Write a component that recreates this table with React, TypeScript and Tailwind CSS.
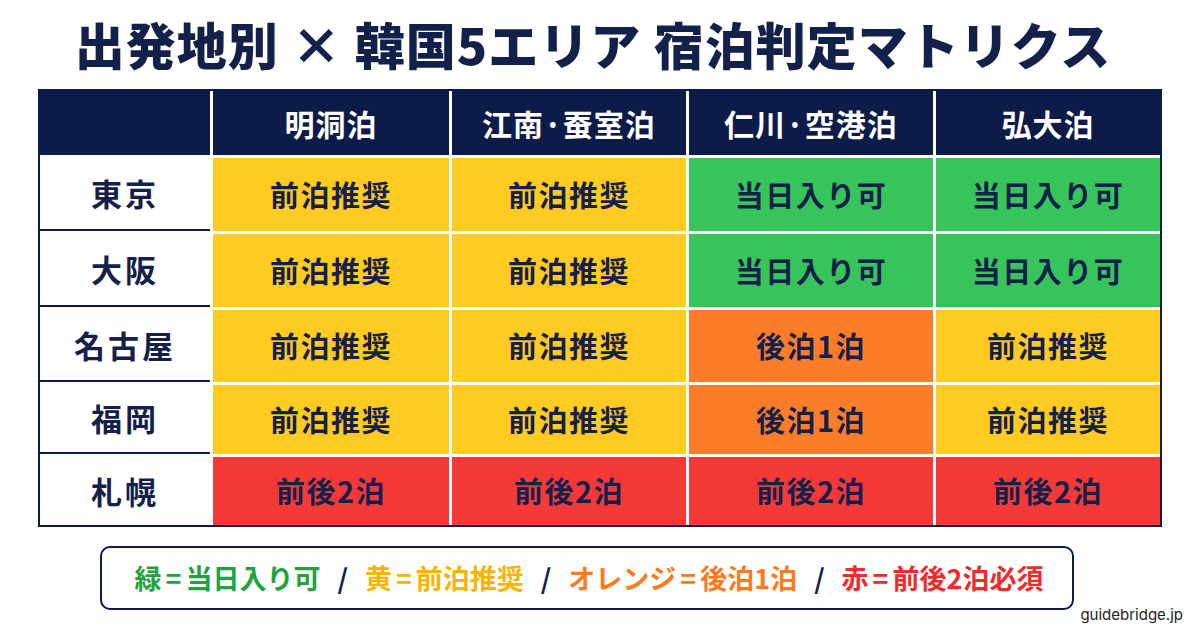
import React from "react";

type Kind = "y" | "g" | "o" | "r";

const cellBg: Record<Kind, string> = {
  y: "bg-[#fdcb21]",
  g: "bg-[#37c55b]",
  o: "bg-[#fb7d2a]",
  r: "bg-[#f43a38]",
};

const cellText: Record<Kind, string> = {
  y: "前泊推奨",
  g: "当日入り可",
  o: "後泊1泊",
  r: "前後2泊",
};

const rows: { label: string; cells: Kind[]; h: string }[] = [
  { label: "東京", cells: ["y", "y", "g", "g"], h: "h-[73px]" },
  { label: "大阪", cells: ["y", "y", "g", "g"], h: "h-[73px]" },
  { label: "名古屋", cells: ["y", "y", "o", "y"], h: "h-[72px]" },
  { label: "福岡", cells: ["y", "y", "o", "y"], h: "h-[69px]" },
  { label: "札幌", cells: ["r", "r", "r", "r"], h: "h-[68px]" },
];

const headers = ["明洞泊", "江南·蚕室泊", "仁川·空港泊", "弘大泊"];

const font = { fontFamily: '"Noto Sans CJK JP", "Noto Sans", sans-serif' };

function Eq() {
  return <span className="mx-[4px]">=</span>;
}

function Slash() {
  return <span className="text-[#13204a] mx-[17px]">/</span>;
}

export default function App() {
  return (
    <div
      className="w-[1200px] h-[630px] bg-white relative overflow-hidden flex flex-col"
      style={font}
    >
      <div className="h-[89px] flex items-center justify-center pb-[4px]">
        <h1 className="text-[50px] font-black leading-none text-[#13204a] tracking-[1px] ml-[-14px]">
          出発地別 × 韓国5エリア 宿泊判定マトリクス
        </h1>
      </div>

      <div className="ml-[38px] w-[1124px] border-2 border-[#0c1b47] bg-white grid grid-cols-[170px_236px_234px_244px_224px] gap-[3px]">
        <div className="h-[64px] bg-[#0c1b47]" />
        {headers.map((h) => (
          <div
            key={h}
            className="h-[64px] bg-[#0c1b47] flex items-center justify-center text-white text-[30px] font-bold tracking-[1px]"
          >
            {h}
          </div>
        ))}
        {rows.map((r, i) => (
          <React.Fragment key={r.label}>
            <div
              className={`${r.h} bg-white flex items-center justify-center text-[31px] font-bold tracking-[3px] text-[#14204a] ${
                i < rows.length - 1 ? "border-b-2 border-[#0c1b47]" : ""
              }`}
            >
              {r.label}
            </div>
            {r.cells.map((c, j) => (
              <div
                key={j}
                className={`${r.h} ${cellBg[c]} flex items-center justify-center text-[29px] font-bold tracking-[1.5px] text-[#14204a]`}
              >
                {cellText[c]}
              </div>
            ))}
          </React.Fragment>
        ))}
      </div>

      <div className="mt-[19px] ml-[100px] w-[974px] h-[64px] border-2 border-[#0c1b47] rounded-[10px] flex items-center justify-center text-[27px] font-bold pl-[4px]">
        <span className="text-[#20a33e]">
          緑<Eq />当日入り可
        </span>
        <Slash />
        <span className="text-[#f7b500]">
          黄<Eq />前泊推奨
        </span>
        <Slash />
        <span className="text-[#fb7a1c]">
          オレンジ<Eq />後泊1泊
        </span>
        <Slash />
        <span className="text-[#ef2b2b]">
          赤<Eq />前後2泊必須
        </span>
      </div>

      <div
        className="absolute right-[17px] bottom-[8px] text-[15px] text-[#222] leading-none"
        style={{ fontFamily: 'Inter, "Noto Sans", sans-serif' }}
      >
        guidebridge.jp
      </div>
    </div>
  );
}
